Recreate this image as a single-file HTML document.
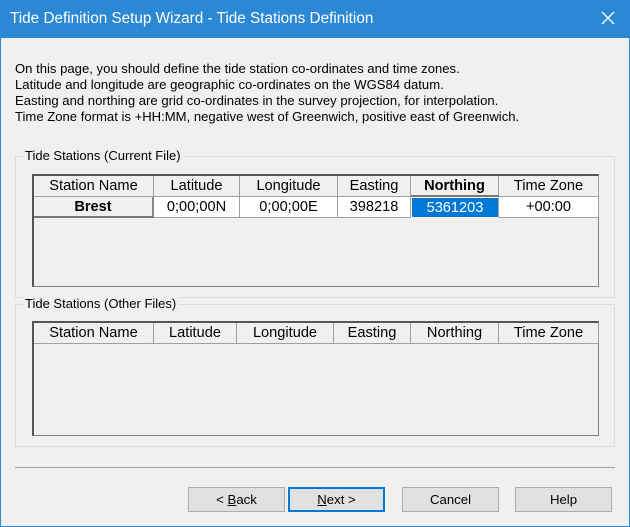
<!DOCTYPE html>
<html><head><style>
*{margin:0;padding:0;box-sizing:border-box}
body{width:630px;height:527px;background:#f0f0f0;font-family:"Liberation Sans",sans-serif;font-size:12px;color:#000;position:relative;overflow:hidden}
.a{position:absolute}
.win{left:0;top:0;width:630px;height:527px;border:1px solid #2b88d4;border-top:none}
.title{left:0;top:0;width:630px;height:38px;background:#2b88d4;color:#fff;font-size:15.3px;line-height:38px;padding-left:10px}
.x{right:14px;top:10px;width:16px;height:16px}
.intro{left:15px;top:61px;line-height:16px;font-size:13.1px}
.gb{border:1px solid #dcdcdc}
.gl{background:#f0f0f0;padding:0 2px;font-size:13px;line-height:14px}
.grid{border:1px solid #828282;border-top:2px solid #555;border-left:2px solid #555;background:#f0f0f0}
.c{position:absolute;text-align:center;font-size:14.6px;line-height:20px;height:21px;white-space:nowrap}
.h{background:#f0f0f0;border-right:1px solid #a0a0a0;border-bottom:1px solid #a0a0a0}
.d{background:#fff;border-right:1px solid #a0a0a0;border-bottom:1px solid #a0a0a0}
.btn{position:absolute;top:487px;height:25px;width:97px;background:#e1e1e1;border:1px solid #adadad;text-align:center;line-height:23px;font-size:13.2px}
</style></head><body>
<div class="a win"></div>
<div class="a title">Tide Definition Setup Wizard - Tide Stations Definition</div>
<svg class="a x" viewBox="0 0 16 16"><path d="M2 2L14 14M14 2L2 14" stroke="#fff" stroke-width="1.3"/></svg>
<div class="a intro">On this page, you should define the tide station co-ordinates and time zones.<br>Latitude and longitude are geographic co-ordinates on the WGS84 datum.<br>Easting and northing are grid co-ordinates in the survey projection, for interpolation.<br>Time Zone format is +HH:MM, negative west of Greenwich, positive east of Greenwich.</div>

<div class="a gb" style="left:15px;top:156px;width:600px;height:142px"></div>
<div class="a gl" style="left:23px;top:149px">Tide Stations (Current File)</div>
<div class="a grid" style="left:32px;top:174px;width:567px;height:113px">
<div class="c h" style="left:0;top:0;width:120px">Station Name</div>
<div class="c h" style="left:120px;top:0;width:86px">Latitude</div>
<div class="c h" style="left:206px;top:0;width:98px">Longitude</div>
<div class="c h" style="left:304px;top:0;width:73px">Easting</div>
<div class="c h" style="left:377px;top:0;width:88px;font-weight:bold;border-bottom:2px solid #777">Northing</div>
<div class="c h" style="left:465px;top:0;width:100px">Time Zone</div>
<div class="c h" style="left:0;top:21px;width:120px;font-weight:bold;border-bottom:2px solid #777;border-right:2px solid #888">Brest</div>
<div class="c d" style="left:120px;top:21px;width:86px">0;00;00N</div>
<div class="c d" style="left:206px;top:21px;width:98px">0;00;00E</div>
<div class="c d" style="left:304px;top:21px;width:73px">398218</div>
<div class="c d" style="left:377px;top:21px;width:88px;background:#0078d7;color:#fff;border:1px solid #fff;border-right-color:#a0a0a0">5361203</div>
<div class="c d" style="left:465px;top:21px;width:100px">+00:00</div>
</div>

<div class="a gb" style="left:15px;top:304px;width:600px;height:143px"></div>
<div class="a gl" style="left:23px;top:297px">Tide Stations (Other Files)</div>
<div class="a grid" style="left:32px;top:321px;width:567px;height:115px">
<div class="c h" style="left:0;top:0;width:120px">Station Name</div>
<div class="c h" style="left:120px;top:0;width:83px">Latitude</div>
<div class="c h" style="left:203px;top:0;width:97px">Longitude</div>
<div class="c h" style="left:300px;top:0;width:77px">Easting</div>
<div class="c h" style="left:377px;top:0;width:88px">Northing</div>
<div class="c h" style="left:465px;top:0;width:100px">Time Zone</div>
</div>

<div class="a" style="left:15px;top:467px;width:600px;height:1px;background:#a0a0a0"></div>
<div class="btn" style="left:188px">&lt; <u>B</u>ack</div>
<div class="btn" style="left:288px;border:2px solid #0078d7;line-height:21px"><u>N</u>ext &gt;</div>
<div class="btn" style="left:402px">Cancel</div>
<div class="btn" style="left:515px">Help</div>
</body></html>
